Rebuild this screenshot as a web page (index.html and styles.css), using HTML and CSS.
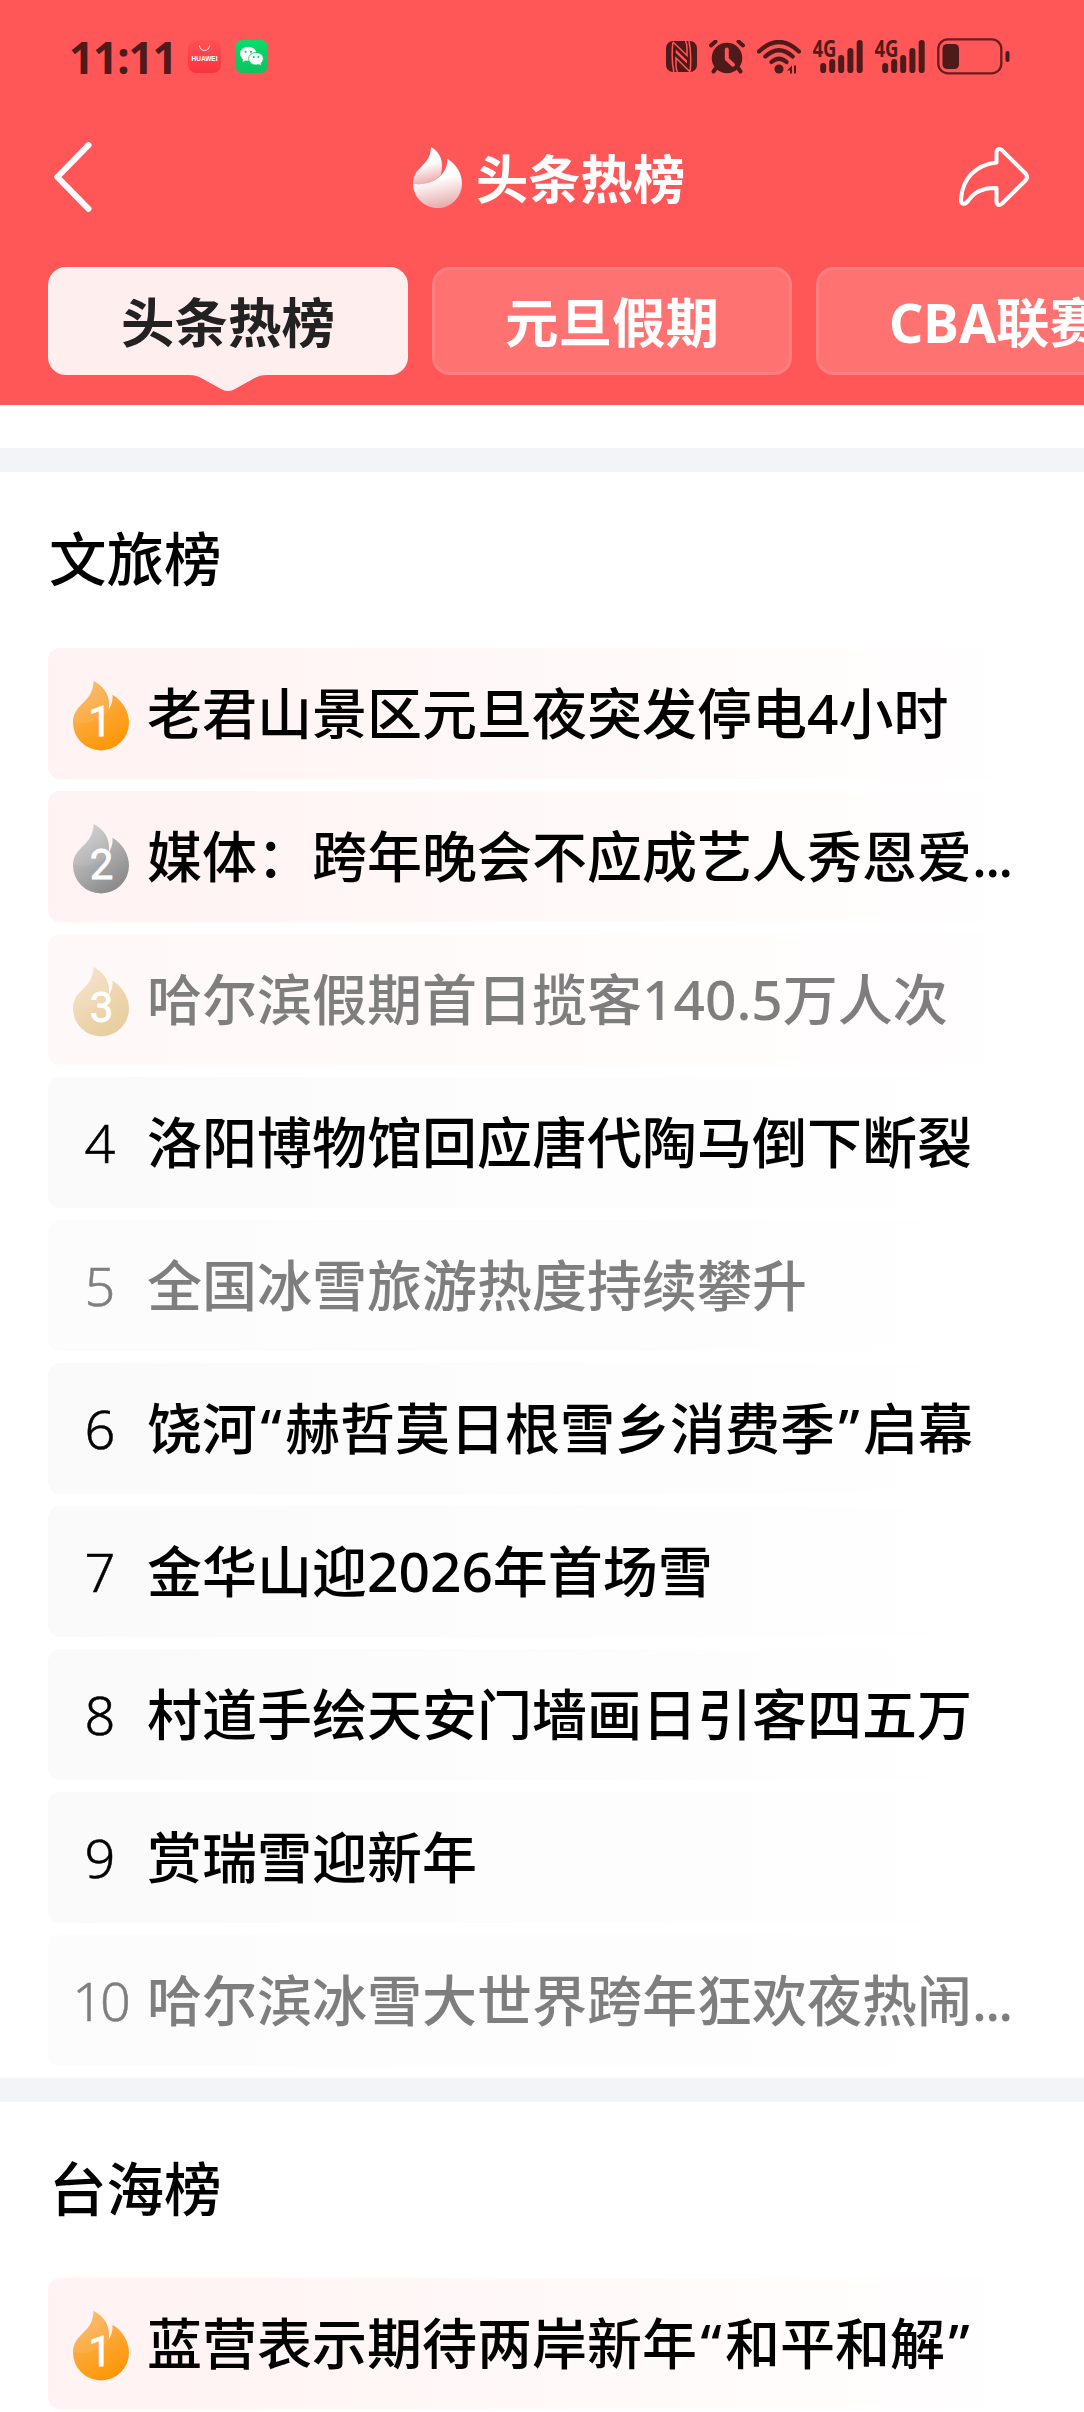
FILE: index.html
```html
<!doctype html>
<html lang="zh-CN">
  <head>
    <meta charset="utf-8" />
    <title>头条热榜</title>
    <link rel="stylesheet" href="styles.css">
    <meta name="viewport" content="width=device-width, initial-scale=1">
  </head>
  <body>

<!-- shared shapes -->
<svg class="defs" width="0" height="0">
  <defs>
    <linearGradient id="gold" x1="0.2" y1="0" x2="0.7" y2="1">
      <stop offset="0" stop-color="#f8b768"/><stop offset="1" stop-color="#ff9500"/>
    </linearGradient>
    <linearGradient id="silver" x1="0.2" y1="0" x2="0.8" y2="1">
      <stop offset="0" stop-color="#d2d2d2"/><stop offset="1" stop-color="#858585"/>
    </linearGradient>
    <linearGradient id="bronze" x1="0.2" y1="0" x2="0.8" y2="1">
      <stop offset="0" stop-color="#efc293"/><stop offset="1" stop-color="#cc9c38"/>
    </linearGradient>
    <linearGradient id="petal" x1="0.4" y1="0" x2="0.6" y2="1">
      <stop offset="0.45" stop-color="#fff"/><stop offset="1" stop-color="#e9a5a5"/>
    </linearGradient>
    <linearGradient id="drop" x1="0.4" y1="0" x2="0.6" y2="1">
      <stop offset="0.4" stop-color="#fff"/><stop offset="1" stop-color="#e7a9a9"/>
    </linearGradient>
    <path id="flame" d="M20.7 0C30 5 38 14 35.6 29C38 25 40 20 39.5 13.7C50 20 56 31 56 41.5A28 28 0 0 1 0 41.5C0 34 3 29 8 24C14 18 20 13 20.7 0Z"/>
    <path id="fold" d="M0 41C14 44 27 39 35 30C35.5 14 30 5 20.7 0C20 13 14 18 8 24C3 29 0 34 0 41Z"/>
    <g id="signal">
      <text x="-0.5" y="17" textLength="24" lengthAdjust="spacingAndGlyphs">4G</text>
      <path d="M10.2 26v4.2M19.2 22v8.2M28.2 18v12.2M37.4 11v19.2M46.7 3v27.2"/>
    </g>
  </defs>
</svg>

<header class="header">
  <div class="status">
    <div class="statusLeft">
      <span class="time">11:11</span>
      <svg class="app" width="33" height="33" viewBox="0 0 33 33">
        <linearGradient id="hw" x2="0" y2="1"><stop offset="0" stop-color="#ff5053"/><stop offset="1" stop-color="#fa3341"/></linearGradient>
        <rect width="33" height="33" rx="8" fill="url(#hw)"/>
        <path d="M11.5 5.5a5 5 0 0 0 10 0" fill="none" stroke="#fff" stroke-width="0.9"/>
        <text x="3.5" y="21" textLength="26" lengthAdjust="spacingAndGlyphs" class="hwText">HUAWEI</text>
      </svg>
      <svg class="app" width="33" height="33" viewBox="0 0 33 33">
        <linearGradient id="wx" x2="0" y2="1"><stop offset="0" stop-color="#07dc6c"/><stop offset="1" stop-color="#12c160"/></linearGradient>
        <rect width="33" height="33" rx="7" fill="url(#wx)"/>
        <ellipse cx="13.2" cy="13.7" rx="8.2" ry="7" fill="#fff"/>
        <path d="M8 18l-.3 4 4-2z" fill="#fff"/>
        <ellipse cx="21" cy="18.7" rx="7.4" ry="6.3" fill="#fff" stroke="#0dce65" stroke-width="0.8"/>
        <path d="M23 23.6l3 1.6-.6-3z" fill="#fff"/>
        <g fill="#0dce65"><circle cx="10.6" cy="11.8" r="1.1"/><circle cx="16" cy="11.8" r="1.1"/><circle cx="18.7" cy="17" r="1"/><circle cx="23.3" cy="17" r="1"/></g>
      </svg>
    </div>
    <div class="statusRight">
      <svg class="nfc" width="31" height="31" viewBox="0 0 31 31">
        <rect width="31" height="31" rx="7" fill="#4f1a1a"/>
        <path d="M6.8 1.5C6 10 5.8 22 7.8 31M7 1L21 14.5V8C21 4 20.5 2 19.5 0M24.2 31L10 17V24C10 27 10.5 29.5 11.5 31M24.2 30C25 20 25 9 23 0" fill="none" stroke="#ff5757" stroke-width="1.5"/>
        <path d="M9.8 8.5L21 19.5V22.5L9.8 12Z" fill="#ff5757"/>
      </svg>
      <svg class="alarm" width="36" height="34" viewBox="0 0 36 34">
        <circle cx="18" cy="18" r="15.3" fill="#4f1a1a"/>
        <path d="M2 5.5L6.5 1.5M34 5.5L29.5 1.5M7 28l-2.5 3.5M29 28l2.5 3.5" stroke="#4f1a1a" stroke-width="4" stroke-linecap="round"/>
        <path d="M17.8 9.5v9.5l6.2 5.7" fill="none" stroke="#ff5757" stroke-width="4" stroke-linecap="round" stroke-linejoin="round"/>
      </svg>
      <svg class="wifi" width="44" height="34" viewBox="0 0 44 34">
        <path d="M2 11.5Q22 -7.5 42 11.5M8.3 16.5Q22 4 35.7 16.5M14.5 22Q22 15.5 29.5 22" fill="none" stroke="#4f1a1a" stroke-width="4.2" stroke-linecap="round"/>
        <circle cx="22" cy="29" r="4.6" fill="#4f1a1a"/>
        <path d="M30 30.5l5-5v8h-2v-3zM44 28.5l-5 5v-8h-2v8h2z" fill="#4f1a1a"/>
      </svg>
      <svg class="bars" width="50" height="33" viewBox="0 0 50 33"><use href="#signal"/></svg>
      <svg class="bars" width="50" height="33" viewBox="0 0 50 33"><use href="#signal"/></svg>
      <svg width="73" height="37" viewBox="0 0 73 37">
        <rect x="1.3" y="1.3" width="63" height="34" rx="9.5" fill="none" stroke="#6b1d1d" stroke-width="2.3"/>
        <rect x="5.5" y="6" width="16.5" height="25" rx="4.5" fill="#4f1a1a"/>
        <rect x="68.5" y="13" width="4" height="11" rx="2" fill="#4f1a1a"/>
      </svg>
    </div>
  </div>

  <div class="nav">
    <svg class="back" width="84" height="70" viewBox="0 0 84 70">
      <path d="M34.5 3.2L3.3 35L34.5 66.8"/>
    </svg>
    <div class="brand">
      <svg width="49" height="61" viewBox="0 0 56 69.5">
        <path d="M20.7 0C30 5 36 16 32 31C25 41 14 43.5 0 42C0 34 3 29 8 24C14 18 20 13 20.7 0Z" fill="url(#petal)"/>
        <path d="M0 42C20 45 39 34 39.5 13.7C50 20 56 31 56 41.5A28 28 0 0 1 0 42Z" fill="url(#drop)"/>
      </svg>
      <h1>头条热榜</h1>
    </div>
    <svg class="share" width="70" height="60" viewBox="0 0 70 60">
      <path d="M37.5 15.5V6Q37.5 2 40.5 2Q41.8 2 43.2 3.3L66.5 26.5Q69.5 30 66.5 33.5L43.2 56.5Q41.8 58 40.5 58Q37.5 58 37.5 54V41C23 40.5 14 46.5 9.5 53.5Q7 57 4.5 56.7Q1.7 56.2 2 52C3.5 32 16 18 37.5 15.5Z"/>
    </svg>
  </div>

  <div class="tabs">
    <div class="tab active">头条热榜
      <svg class="tip" width="78" height="17" viewBox="0 0 78 17"><path d="M0 0V1Q8 1 14 5L33 15.5Q39 18.5 45 15.5L64 5Q70 1 78 1V0Z"/></svg>
    </div>
    <div class="tab">元旦假期</div>
    <div class="tab">CBA联赛</div>
  </div>
</header>

<section class="board">
  <h2>文旅榜</h2>
  <ol class="list">
    <li class="item hot">
      <svg class="medal" width="56" height="70" viewBox="0 0 56 70"><use href="#flame" fill="url(#gold)"/><use href="#fold" class="fold"/><text x="27" y="55">1</text></svg>
      <span class="text">老君山景区元旦夜突发停电4小时</span>
    </li>
    <li class="item hot">
      <svg class="medal" width="56" height="70" viewBox="0 0 56 70"><use href="#flame" fill="url(#silver)"/><use href="#fold" class="fold"/><text x="28.5" y="55">2</text></svg>
      <span class="text">媒体：跨年晚会不应成艺人秀恩爱<i>...</i></span>
    </li>
    <li class="item hot read">
      <svg class="medal" width="56" height="70" viewBox="0 0 56 70"><use href="#flame" fill="url(#bronze)"/><use href="#fold" class="fold"/><text x="28.5" y="55">3</text></svg>
      <span class="text">哈尔滨假期首日揽客140.5万人次</span>
    </li>
    <li class="item"><span class="rank">4</span><span class="text">洛阳博物馆回应唐代陶马倒下断裂</span></li>
    <li class="item read"><span class="rank">5</span><span class="text">全国冰雪旅游热度持续攀升</span></li>
    <li class="item"><span class="rank">6</span><span class="text">饶河<b>“</b>赫哲莫日根雪乡消费季<b>”</b>启幕</span></li>
    <li class="item"><span class="rank">7</span><span class="text">金华山迎2026年首场雪</span></li>
    <li class="item"><span class="rank">8</span><span class="text">村道手绘天安门墙画日引客四五万</span></li>
    <li class="item"><span class="rank">9</span><span class="text">赏瑞雪迎新年</span></li>
    <li class="item read"><span class="rank ten">10</span><span class="text">哈尔滨冰雪大世界跨年狂欢夜热闹<i>...</i></span></li>
  </ol>
</section>

<section class="board">
  <h2>台海榜</h2>
  <ol class="list">
    <li class="item hot">
      <svg class="medal" width="56" height="70" viewBox="0 0 56 70"><use href="#flame" fill="url(#gold)"/><use href="#fold" class="fold"/><text x="27" y="55">1</text></svg>
      <span class="text">蓝营表示期待两岸新年<b>“</b>和平和解<b>”</b></span>
    </li>
  </ol>
</section>

  </body>
</html>
```

FILE: styles.css
```css
* {
  box-sizing: border-box;
}

body {
  margin: 0;
  height: 2412px;
  overflow: hidden;
  background-color: #fff;
  font-family: "Noto Sans", "Noto Sans CJK SC", sans-serif;
  color: #000;
}

h1, h2, ol {
  margin: 0;
  padding: 0;
}

svg {
  display: block;
  flex: none;
}

.defs {
  position: absolute;
}

/* header */

.header {
  height: 404.5px;
  background-color: #ff5757;
  overflow: hidden;
}

.status {
  display: flex;
  justify-content: space-between;
  align-items: center;
  height: 113px;
  padding: 0 74px 0 69px;
}

.statusLeft, .statusRight {
  display: flex;
  align-items: center;
}

.time {
  width: 119px;
  font: 700 44px/58px "Noto Sans", sans-serif;
  letter-spacing: -1.1px;
  color: #4f1a1a;
}

.app + .app {
  margin-left: 14px;
}

.hwText {
  font: 700 6.5px "Liberation Sans", sans-serif;
  fill: #fff;
}

.nfc, .alarm, .wifi, .bars {
  margin-right: 12px;
}

.bars {
  fill: #4f1a1a;
  font: 700 23px "Noto Sans", sans-serif;
}

#signal path {
  stroke: #4f1a1a;
  stroke-width: 6;
  stroke-linecap: round;
}

.nav {
  display: flex;
  justify-content: space-between;
  align-items: center;
  height: 128px;
  padding: 0 55px 0 54px;
}

.back path {
  fill: none;
  stroke: #fff;
  stroke-width: 6;
  stroke-linecap: round;
  stroke-linejoin: round;
}

.share path {
  fill: none;
  stroke: #fff;
  stroke-width: 4;
  stroke-linejoin: round;
}

.brand {
  display: flex;
  align-items: center;
  gap: 14px;
}

.brand h1 {
  width: 208px;
  padding-top: 3px;
  white-space: nowrap;
  font-size: 52.3px;
  line-height: 60px;
  font-weight: 700;
  color: #fff;
}

.tabs {
  display: flex;
  gap: 24px;
  padding: 26px 0 0 48px;
}

.tab {
  flex: none;
  display: flex;
  justify-content: center;
  align-items: center;
  width: 360px;
  height: 108px;
  padding-top: 3px;
  border: 3px solid rgba(255, 255, 255, 0.1);
  border-radius: 18px;
  background-color: rgba(255, 255, 255, 0.16);
  font-size: 53.5px;
  line-height: 60px;
  font-weight: 700;
  color: #fff;
}

.active {
  position: relative;
  border: none;
  background-color: #ffeeee;
  color: #222;
}

.tip {
  position: absolute;
  left: 141px;
  top: 107px;
  fill: #ffeeee;
}

/* boards */

.board {
  border-top: 24px solid #f3f4f7;
}

.header + .board {
  margin-top: 43.5px;
}

.board h2 {
  height: 176px;
  padding: 0 0 2px 49px;
  font-size: 57.5px;
  line-height: 174px;
  font-weight: 500;
}

.list {
  display: flex;
  flex-direction: column;
  gap: 12.5px;
  padding: 0 48px 12.5px;
  list-style: none;
}

.item {
  display: flex;
  align-items: center;
  height: 130.5px;
  border-radius: 12px;
  background: linear-gradient(to right, #fafafa, #fff);
}

.hot {
  background: linear-gradient(to right, #fff2f2, #fff);
}

.read {
  opacity: 0.5;
}

.medal {
  margin: 6px 18px 0 25px;
}

.medal text {
  font: 42px Roboto, sans-serif;
  fill: #fff;
  stroke: #fff;
  stroke-width: 0.8;
  text-anchor: middle;
}

.fold {
  fill: #fff;
  opacity: 0.08;
}

.rank {
  width: 104px;
  margin-right: -5px;
  text-align: center;
  font-size: 54px;
  line-height: 80px;
  font-weight: 300;
  -webkit-text-stroke: 0.5px #000;
}

.ten {
  letter-spacing: -3px;
}

.text {
  white-space: nowrap;
  font-size: 55px;
  line-height: 80px;
  font-weight: 500;
}

/* trailing dots and narrow quotes */
.text i {
  font-style: normal;
  letter-spacing: -1.8px;
}

.text b {
  display: inline-block;
  width: 28px;
  font-weight: 500;
  text-align: center;
}
```
